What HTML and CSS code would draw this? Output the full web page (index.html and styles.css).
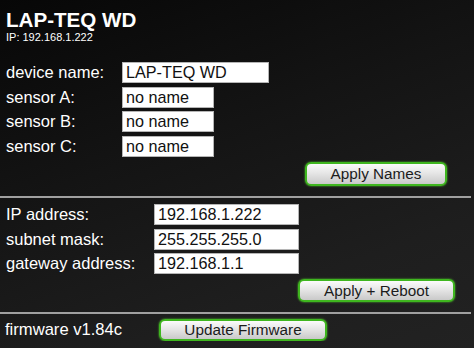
FILE: index.html
```html
<!DOCTYPE html>
<html lang="en">
<head>
    <meta charset="UTF-8">
    <meta name="viewport" content="width=device-width, initial-scale=1.0">
    <title>LAP-TEQ WD</title>
    <link rel="stylesheet" href="styles.css">
</head>
<body>
    <header class="head">
        <h1>LAP-TEQ WD</h1>
        <div class="ip">IP: 192.168.1.222</div>
    </header>

    <section class="block names">
        <div class="row"><label>device name:</label><input class="field wide" type="text" value="LAP-TEQ WD"></div>
        <div class="row"><label>sensor A:</label><input class="field short" type="text" value="no name"></div>
        <div class="row"><label>sensor B:</label><input class="field short" type="text" value="no name"></div>
        <div class="row"><label>sensor C:</label><input class="field short" type="text" value="no name"></div>
        <div class="actions"><button class="btn btn-names">Apply Names</button></div>
    </section>

    <hr class="sep">

    <section class="block net">
        <div class="row"><label>IP address:</label><input class="field wide" type="text" value="192.168.1.222"></div>
        <div class="row"><label>subnet mask:</label><input class="field wide" type="text" value="255.255.255.0"></div>
        <div class="row"><label>gateway address:</label><input class="field wide" type="text" value="192.168.1.1"></div>
        <div class="actions"><button class="btn btn-reboot">Apply + Reboot</button></div>
    </section>

    <hr class="sep">

    <section class="firmware">
        <span class="fw-label">firmware v1.84c</span>
        <button class="btn btn-update">Update Firmware</button>
    </section>
</body>
</html>
```

FILE: styles.css
```css
html {
    height: 100%;
    background: linear-gradient(160deg, #070707 0%, #141414 40%, #1e1e1e 75%, #222 100%);
}
body {
    margin: 0;
    padding: 8px 0 0 0;
    font-family: "Liberation Sans", Arial, sans-serif;
    color: #fff;
}
.head {
    padding-left: 6px;
}
.head h1 {
    margin: 0;
    font-size: 20.6px;
    line-height: 23px;
    font-weight: bold;
}
.ip {
    font-size: 11px;
}
.block {
    padding-left: 6px;
}
.names {
    padding-top: 19px;
}
.net {
    padding-top: 6px;
}
.row {
    display: flex;
    align-items: center;
    height: 21px;
    margin-bottom: 3.5px;
}
.row label {
    font-size: 16.5px;
}
.names .row label {
    width: 116px;
}
.net .row label {
    width: 148px;
}
.field {
    box-sizing: border-box;
    height: 21px;
    padding: 0 3px;
    margin: 0;
    border: 1px solid #b5b5b5;
    background: #fff;
    color: #111;
    font-family: "Liberation Sans", Arial, sans-serif;
    font-size: 16.2px;
}
.names .wide {
    width: 147px;
}
.net .wide {
    width: 145px;
}
.short {
    width: 92px;
}
.actions {
    display: flex;
}
.btn {
    box-sizing: border-box;
    padding: 0;
    border: 2px solid #3fb61f;
    border-radius: 6px;
    background: linear-gradient(#fbfbfb, #e6e6e6 45%, #c9c9c9);
    box-shadow: 0 0 2px #56d42e;
    color: #1c1c1c;
    font-family: "Liberation Sans", Arial, sans-serif;
    font-size: 15.3px;
}
.btn-names {
    width: 142px;
    height: 24px;
    margin: 2px 0 0 299px;
}
.btn-reboot {
    width: 157px;
    height: 23px;
    margin: 1.5px 0 0 292px;
}
.sep {
    width: 471px;
    height: 0;
    margin: 10px 0 0 0;
    border: none;
    border-top: 2px solid #a0a0a0;
}
.firmware {
    display: flex;
    align-items: center;
    padding: 5px 0 0 5px;
}
.fw-label {
    width: 154px;
    font-size: 16.6px;
}
.btn-update {
    width: 168px;
    height: 22px;
}
```
